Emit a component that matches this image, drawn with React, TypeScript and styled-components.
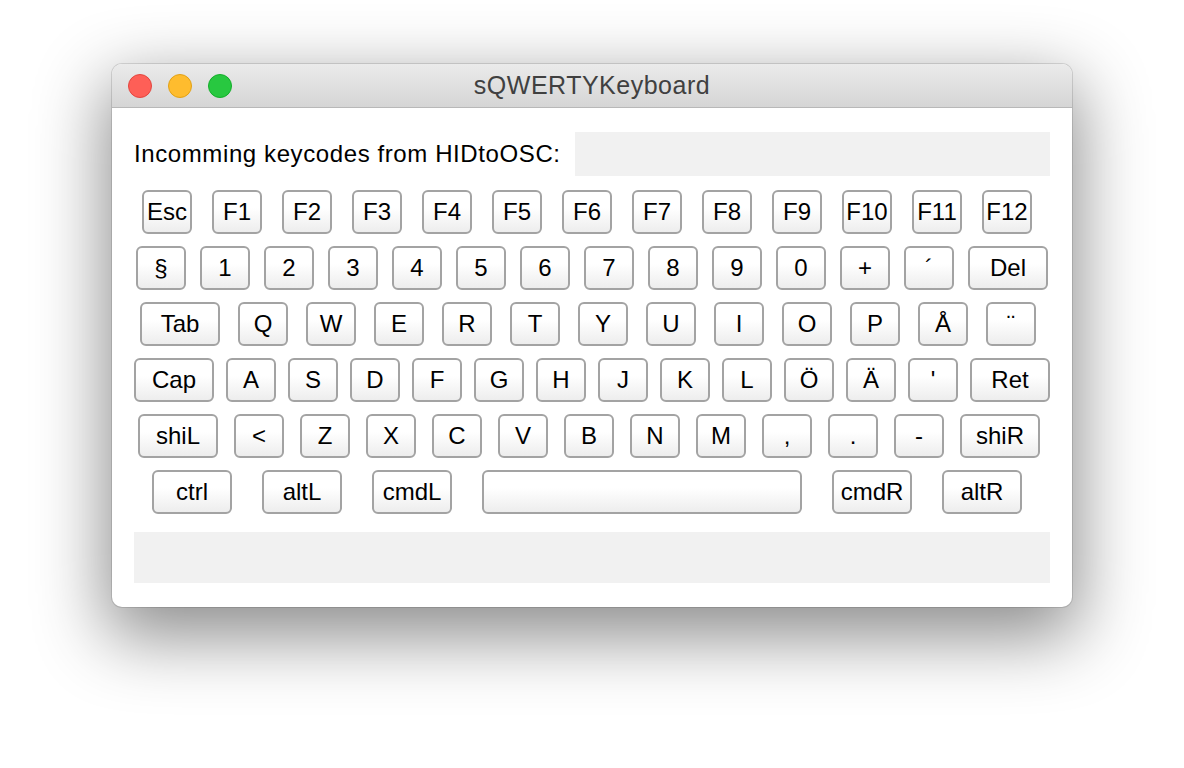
import styled, { createGlobalStyle } from "styled-components"

const GlobalStyle = createGlobalStyle`
  html, body {
    margin: 0;
    background: #ffffff;
    font-family: "Liberation Sans", Arial, sans-serif;
  }
`

type KeyDef = { label: string; width?: number }
type RowDef = { offset: number; gap: number; keys: KeyDef[] }

const k = (labels: string[]): KeyDef[] => labels.map(label => ({ label }))

const rows: RowDef[] = [
  { offset: 8, gap: 20, keys: k(["Esc", "F1", "F2", "F3", "F4", "F5", "F6", "F7", "F8", "F9", "F10", "F11", "F12"]) },
  {
    offset: 2, gap: 14,
    keys: [...k(["§", "1", "2", "3", "4", "5", "6", "7", "8", "9", "0", "+", "´"]), { label: "Del", width: 80 }],
  },
  {
    offset: 6, gap: 18,
    keys: [{ label: "Tab", width: 80 }, ...k(["Q", "W", "E", "R", "T", "Y", "U", "I", "O", "P", "Å", "¨"])],
  },
  {
    offset: 0, gap: 12,
    keys: [{ label: "Cap", width: 80 }, ...k(["A", "S", "D", "F", "G", "H", "J", "K", "L", "Ö", "Ä", "'"]), { label: "Ret", width: 80 }],
  },
  {
    offset: 4, gap: 16,
    keys: [{ label: "shiL", width: 80 }, ...k(["<", "Z", "X", "C", "V", "B", "N", "M", ",", ".", "-"]), { label: "shiR", width: 80 }],
  },
  {
    offset: 18, gap: 30,
    keys: [
      { label: "ctrl", width: 80 },
      { label: "altL", width: 80 },
      { label: "cmdL", width: 80 },
      { label: "", width: 320 },
      { label: "cmdR", width: 80 },
      { label: "altR", width: 80 },
    ],
  },
]

const Page = styled.div`
  box-sizing: border-box;
  min-height: 768px;
  padding: 64px 0 0 112px;
`

const Window = styled.div`
  width: 960px;
  border-radius: 10px;
  overflow: hidden;
  background: #ffffff;
  box-shadow: 0 24px 70px 6px rgba(0, 0, 0, 0.45), 0 0 0 1px rgba(0, 0, 0, 0.12);
`

const TitleBar = styled.div`
  height: 43px;
  display: grid;
  grid-template-columns: 1fr auto 1fr;
  align-items: center;
  background: linear-gradient(#ebebeb, #d5d5d5);
  border-bottom: 1px solid #b8b8b8;
`

const Lights = styled.div`
  display: flex;
  gap: 16px;
  padding-left: 16px;
`

const Light = styled.span<{ $fill: string; $edge: string }>`
  width: 24px;
  height: 24px;
  box-sizing: border-box;
  border-radius: 50%;
  background: ${p => p.$fill};
  border: 1px solid ${p => p.$edge};
`

const Title = styled.div`
  font-size: 25px;
  letter-spacing: 0.5px;
  color: #404040;
`

const Content = styled.div`
  padding: 24px 22px 24px;
  display: flex;
  flex-direction: column;
`

const Header = styled.div`
  display: flex;
  align-items: center;
  gap: 14px;
  margin-bottom: 14px;
`

const Label = styled.span`
  font-size: 24px;
  letter-spacing: 0.6px;
  color: #000;
  white-space: nowrap;
`

const Field = styled.div`
  flex: 1;
  height: 44px;
  background: #f1f1f1;
`

const Keyboard = styled.div`
  display: flex;
  flex-direction: column;
  gap: 12px;
`

const Row = styled.div<{ $offset: number; $gap: number }>`
  display: flex;
  padding-left: ${p => p.$offset}px;
  gap: ${p => p.$gap}px;
`

const Key = styled.button<{ $width: number }>`
  width: ${p => p.$width}px;
  height: 44px;
  box-sizing: border-box;
  padding: 0;
  border: 2px solid #a3a3a3;
  border-radius: 6px;
  background: linear-gradient(#ffffff 40%, #ededed);
  font-family: "Liberation Sans", Arial, sans-serif;
  font-size: 24px;
  color: #000;
  display: flex;
  align-items: center;
  justify-content: center;
`

const Output = styled.div`
  margin-top: 18px;
  height: 51px;
  background: #f1f1f1;
`

export default function App() {
  return (
    <Page>
      <GlobalStyle />
      <Window>
        <TitleBar>
          <Lights>
            <Light $fill="#fe5f57" $edge="#e2463f" />
            <Light $fill="#febc2e" $edge="#e1a116" />
            <Light $fill="#28c840" $edge="#14ae2b" />
          </Lights>
          <Title>sQWERTYKeyboard</Title>
          <span />
        </TitleBar>
        <Content>
          <Header>
            <Label>Incomming keycodes from HIDtoOSC:</Label>
            <Field />
          </Header>
          <Keyboard>
            {rows.map((row, i) => (
              <Row key={i} $offset={row.offset} $gap={row.gap}>
                {row.keys.map((key, j) => (
                  <Key key={j} $width={key.width ?? 50}>{key.label}</Key>
                ))}
              </Row>
            ))}
          </Keyboard>
          <Output />
        </Content>
      </Window>
    </Page>
  )
}
